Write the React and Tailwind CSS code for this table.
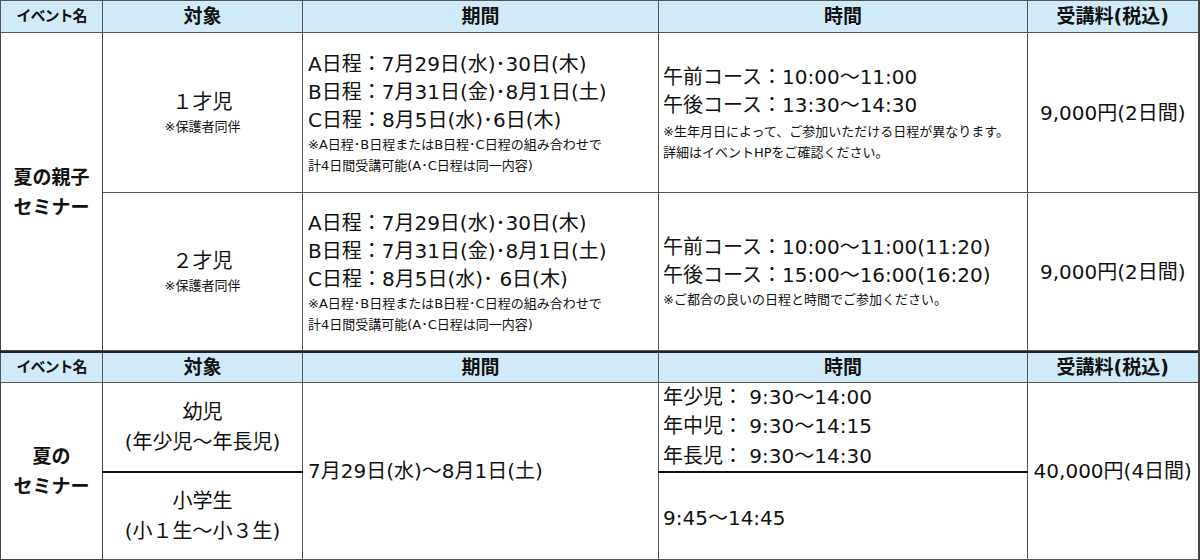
const Head = ({ children, small }) => (
  <th
    className={
      "h-[30px] border border-[#555] bg-[#d0eaf8] p-0 text-center font-bold leading-none " +
      (small ? "text-[15px] tracking-[-1px]" : "text-[19px]")
    }
  >
    {children}
  </th>
);

const HeaderRow = ({ top }) => (
  <tr className={top ? "h-[32px]" : "h-[30px]"}>
    <Head small>イベント名</Head>
    <Head>対象</Head>
    <Head>期間</Head>
    <Head>時間</Head>
    <Head>受講料(税込)</Head>
  </tr>
);

const Cols = () => (
  <colgroup>
    <col className="w-[102px]" />
    <col className="w-[200px]" />
    <col className="w-[356px]" />
    <col className="w-[369px]" />
    <col className="w-[171px]" />
  </colgroup>
);

const Big = ({ children }) => <div className="text-[20px] leading-[28px]">{children}</div>;
const Note = ({ children }) => <div className="text-[13px] leading-[21px]">{children}</div>;

const Dates = ({ c }) => (
  <td className="border border-[#555] px-[5px] align-middle">
    <Big>A日程：7月29日(水)･30日(木)</Big>
    <Big>B日程：7月31日(金)･8月1日(土)</Big>
    <Big>{c}</Big>
    <Note>※A日程･B日程またはB日程･C日程の組み合わせで</Note>
    <Note>計4日間受講可能(A･C日程は同一内容)</Note>
  </td>
);

const Fee = ({ children, rows }) => (
  <td rowSpan={rows} className="border border-[#555] px-[2px] text-center align-middle text-[20px] leading-[28px]">
    {children}
  </td>
);

export default function App() {
  return (
    <div className="min-h-[560px] bg-[#ececec] font-['DejaVu_Sans','Noto_Sans_CJK_JP',sans-serif] text-[#111]">
      <table className="w-[1198px] table-fixed border-collapse border-r-2 border-r-[#444] bg-white">
        <Cols />
        <tbody>
          <HeaderRow top />
          <tr className="h-[160px]">
            <td rowSpan={2} className="border border-[#444] text-center align-middle text-[19px] font-bold leading-[30px]">
              夏の親子
              <br />
              セミナー
            </td>
            <td className="border border-[#555] text-center align-middle">
              <Big>１才児</Big>
              <Note>※保護者同伴</Note>
            </td>
            <Dates c="C日程：8月5日(水)･6日(木)" />
            <td className="border border-[#555] px-[4px] align-middle">
              <Big>午前コース：10:00～11:00</Big>
              <Big>午後コース：13:30～14:30</Big>
              <div className="mt-[2px]">
                <Note>※生年月日によって、ご参加いただける日程が異なります。</Note>
                <Note>詳細はイベントHPをご確認ください。</Note>
              </div>
            </td>
            <Fee>9,000円(2日間)</Fee>
          </tr>
          <tr className="h-[158px]">
            <td className="border border-[#555] text-center align-middle">
              <Big>２才児</Big>
              <Note>※保護者同伴</Note>
            </td>
            <Dates c="C日程：8月5日(水)･ 6日(木)" />
            <td className="border border-[#555] px-[4px] align-middle">
              <Big>午前コース：10:00～11:00(11:20)</Big>
              <Big>午後コース：15:00～16:00(16:20)</Big>
              <Note>※ご都合の良いの日程と時間でご参加ください。</Note>
            </td>
            <Fee>9,000円(2日間)</Fee>
          </tr>
        </tbody>
      </table>

      <table className="w-[1198px] table-fixed border-collapse border-t-2 border-r-2 border-[#222] border-r-[#444] bg-white">
        <Cols />
        <tbody>
          <HeaderRow />
          <tr className="h-[88px]">
            <td rowSpan={2} className="border border-[#444] text-center align-middle text-[19px] font-bold leading-[30px]">
              夏の
              <br />
              セミナー
            </td>
            <td className="border border-b-2 border-[#555] border-b-[#111] text-center align-middle text-[20px] leading-[30px]">
              <div>幼児</div>
              <div>(年少児～年長児)</div>
            </td>
            <td rowSpan={2} className="border border-[#555] px-[5px] align-middle text-[20px] leading-[28px]">
              7月29日(水)～8月1日(土)
            </td>
            <td className="border border-b-2 border-[#555] border-b-[#111] px-[4px] align-middle text-[20px] leading-[29.5px]">
              <div>年少児： 9:30～14:00</div>
              <div>年中児： 9:30～14:15</div>
              <div>年長児： 9:30～14:30</div>
            </td>
            <Fee rows={2}>40,000円(4日間)</Fee>
          </tr>
          <tr className="h-[87px]">
            <td className="border border-[#555] text-center align-middle text-[20px] leading-[30px]">
              <div>小学生</div>
              <div>(小１生～小３生)</div>
            </td>
            <td className="border border-[#555] px-[4px] pt-[4px] align-middle text-[20px] leading-[28px]">
              9:45～14:45
            </td>
          </tr>
        </tbody>
      </table>
    </div>
  );
}
